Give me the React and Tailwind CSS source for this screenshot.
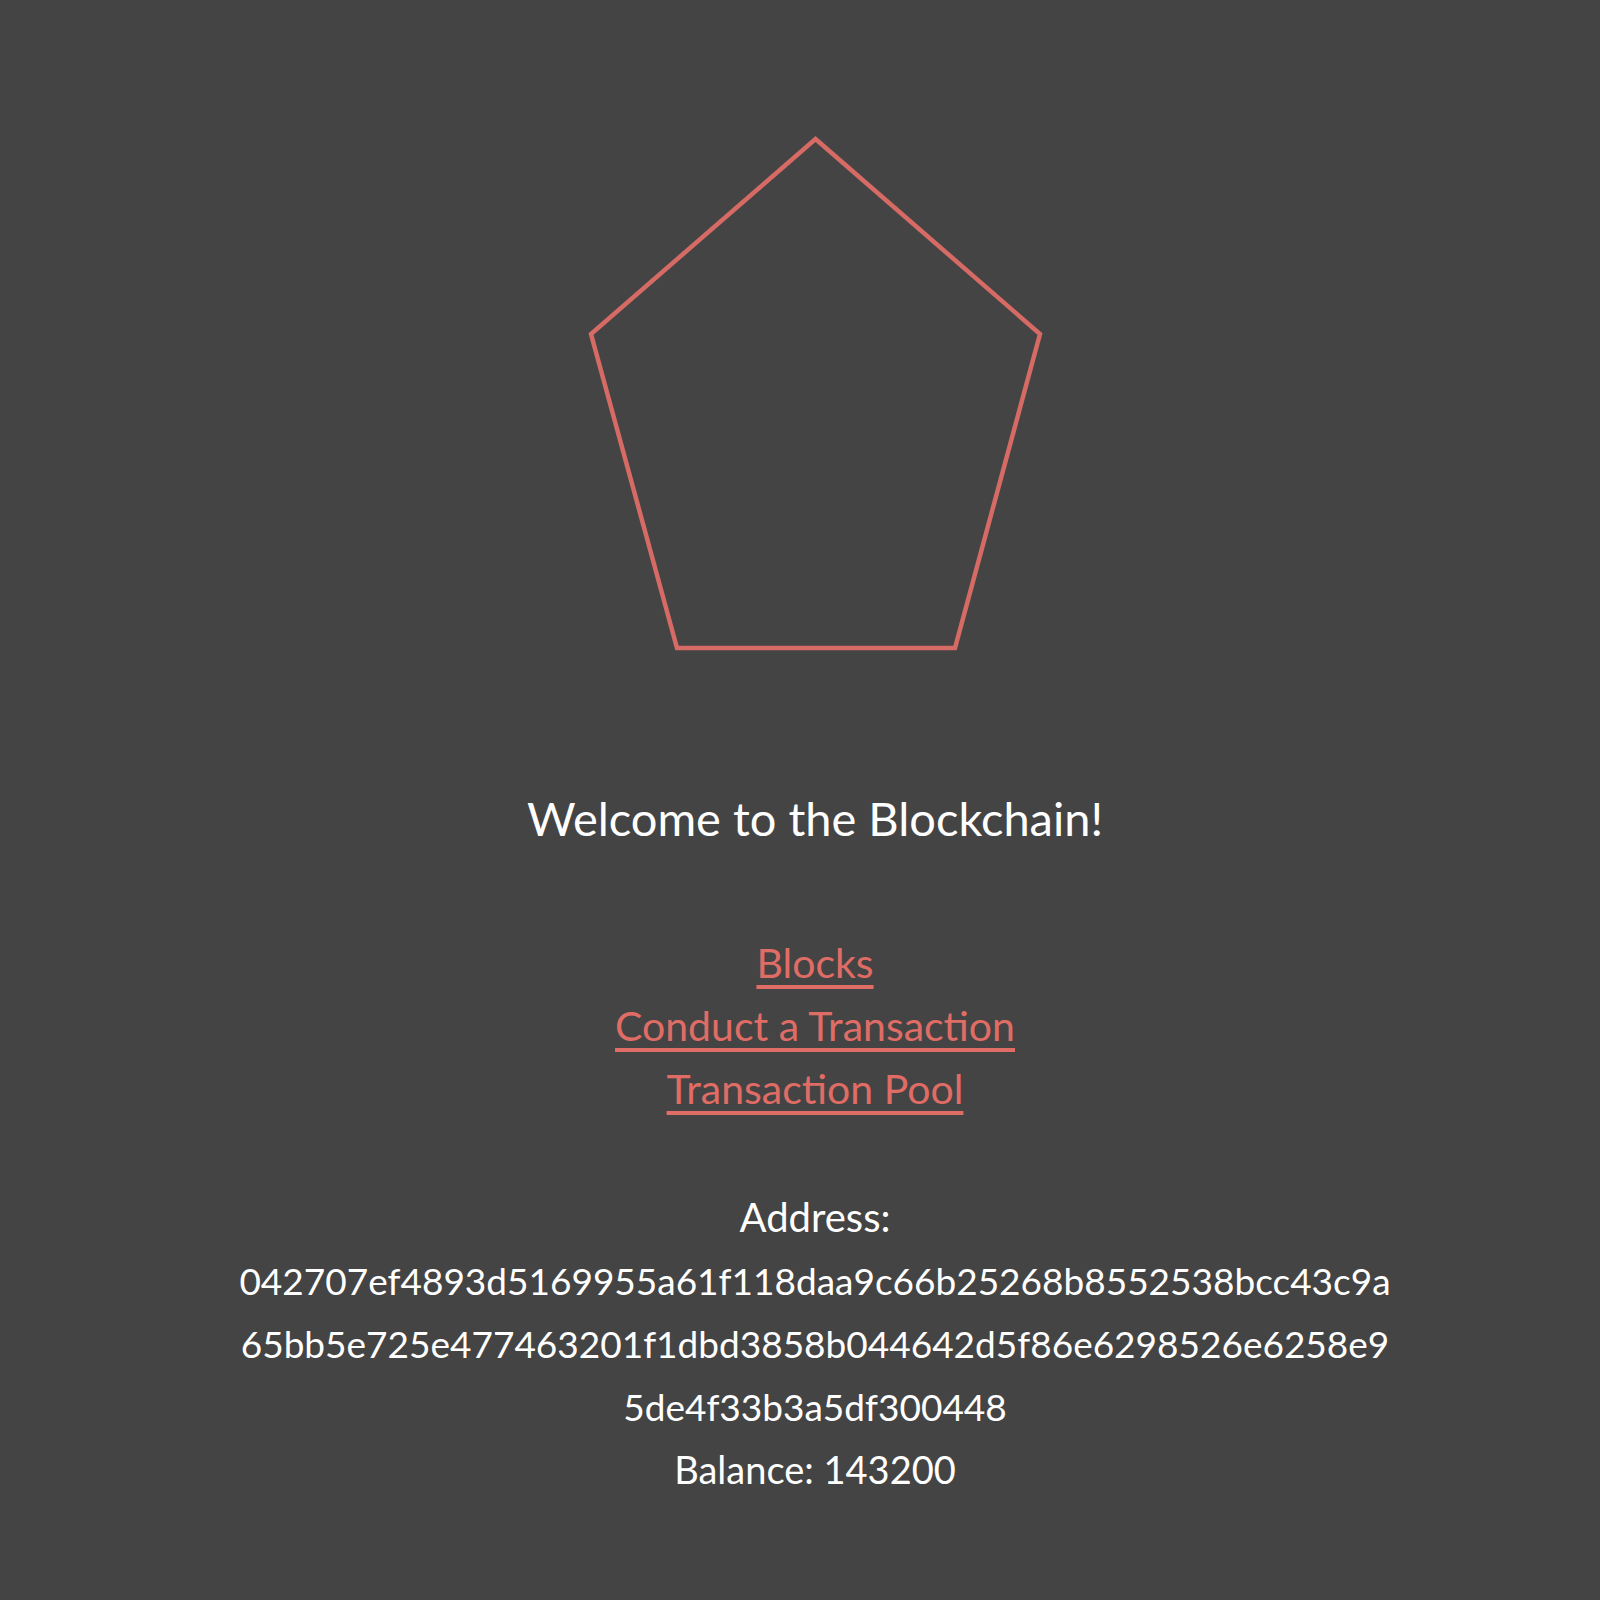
import React from 'react';

const ADDRESS =
  '042707ef4893d5169955a61f118daa9c66b25268b8552538bcc43c9a65bb5e725e477463201f1dbd3858b044642d5f86e6298526e6258e95de4f33b3a5df300448';

const App = () => {
  // the key wraps at these points in the original
  const lines = [ADDRESS.slice(0, 56), ADDRESS.slice(56, 111), ADDRESS.slice(111)];

  return (
    <div
      className="min-h-screen w-full bg-[#444444] pl-[30px] flex flex-col items-center text-white"
      style={{ fontFamily: 'Lato, "Noto Sans", sans-serif' }}
    >
      {/* Logo */}
      <svg className="mt-[134px]" width="461" height="520" viewBox="0 0 461 520" fill="none">
        <polygon
          points="230.5,5 455,200 370,514 92,514 6,200"
          stroke="#d66a65"
          strokeWidth="4.5"
          strokeLinejoin="miter"
        />
      </svg>

      <h1 className="mt-[134px] text-[47px] leading-[60px] font-normal">Welcome to the Blockchain!</h1>

      {/* Nav links */}
      <div className="mt-[83px] flex flex-col items-center text-[41px] leading-[63px]">
        <a href="#" className="text-[#e06c66] underline decoration-[3.5px] underline-offset-[7px]">
          Blocks
        </a>
        <a href="#" className="text-[#e06c66] underline decoration-[3.5px] underline-offset-[7px]">
          Conduct a Transaction
        </a>
        <a href="#" className="text-[#e06c66] underline decoration-[3.5px] underline-offset-[7px]">
          Transaction Pool
        </a>
      </div>

      {/* Wallet info */}
      <div className="mt-[66px] mb-[80px] flex flex-col items-center text-[40px] leading-[63px] text-center">
        <div>Address:</div>
        {lines.map((l) => (
          <div key={l} className="text-[37px]">
            {l}
          </div>
        ))}
        <div className="text-[38px]">Balance: 143200</div>
      </div>
    </div>
  );
};

export default App;
